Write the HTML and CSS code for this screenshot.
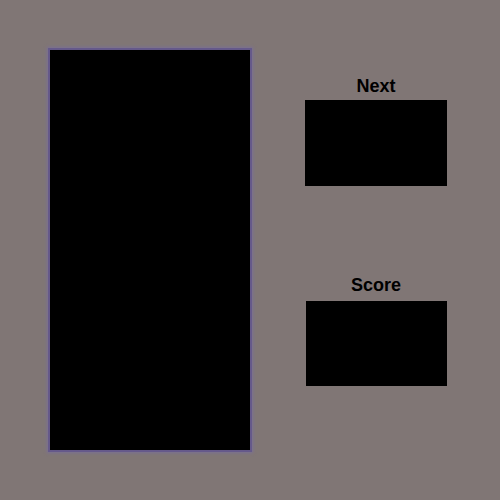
FILE: index.html
```html
<!DOCTYPE html>
<html>
<head>
<meta charset="utf-8">
<link rel="stylesheet" href="styles.css">
</head>
<body>
<div class="app">
  <div class="board"></div>
  <div class="side">
    <div class="label">Next</div>
    <div class="box next"></div>
    <div class="label score-label">Score</div>
    <div class="box score"></div>
  </div>
</div>
</body>
</html>
```
FILE: styles.css
```css
html, body {
  margin: 0;
  padding: 0;
  width: 500px;
  height: 500px;
  background: #807675;
  overflow: hidden;
}
.app {
  display: flex;
  align-items: flex-start;
  padding: 48px 0 0 48px;
}
.board {
  width: 200px;
  height: 400px;
  background: #000;
  border: 2px solid #65598a;
  box-shadow: 0 0 3px 1px #7a7096;
}
.side {
  margin-left: 53px;
  width: 142px;
  display: flex;
  flex-direction: column;
  padding-top: 27px;
}
.label {
  font-family: "Liberation Sans", Arial, sans-serif;
  font-weight: bold;
  font-size: 18px;
  line-height: 22px;
  text-align: center;
  color: #000;
}
.box {
  background: #000;
}
.next {
  margin-top: 3px;
  height: 86px;
}
.score-label {
  margin-top: 88px;
}
.score {
  margin-top: 5px;
  margin-left: 1px;
  height: 85px;
}
```
